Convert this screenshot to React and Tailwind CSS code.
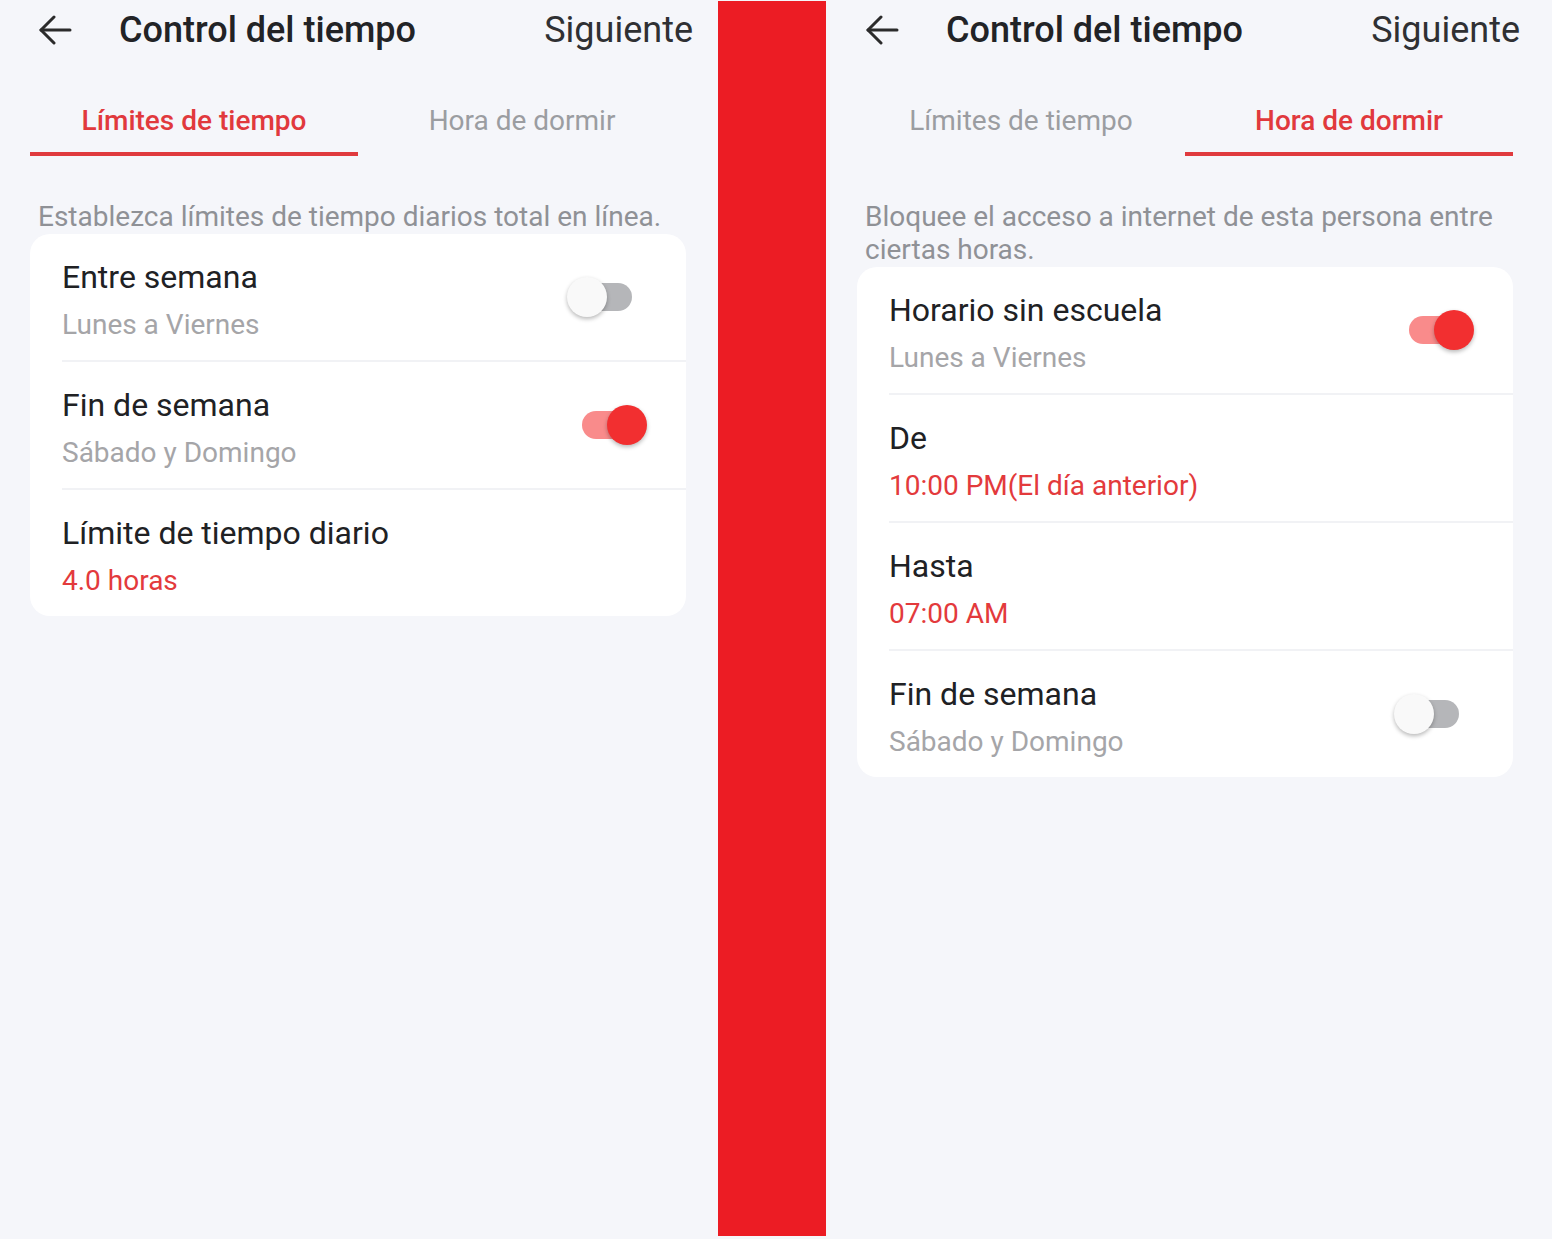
import React from "react";

const font = { fontFamily: "Roboto, 'Noto Sans', sans-serif" };

function BackArrow() {
  return (
    <svg width="34" height="30" viewBox="0 0 34 30" fill="none" stroke="#2b2b2b" strokeWidth="3" strokeLinecap="round" strokeLinejoin="round">
      <path d="M32 15H3" />
      <path d="M16 2L3 15L16 28" />
    </svg>
  );
}

function Toggle({ on }) {
  return (
    <div className="relative w-[80px] h-[40px] shrink-0">
      <div
        className={
          "absolute left-[15px] top-[6px] w-[50px] h-[28px] rounded-full " +
          (on ? "bg-[#f98b8b]" : "bg-[#b5b6b9]")
        }
      />
      <div
        className={
          "absolute top-0 w-[40px] h-[40px] rounded-full shadow-[0_2px_4px_rgba(0,0,0,0.28)] " +
          (on ? "left-[40px] bg-[#f22f30]" : "left-0 bg-[#f9f9f9]")
        }
      />
    </div>
  );
}

function Row({ title, sub, red, toggle, last }) {
  return (
    <div>
      <div className="flex justify-between h-[126px] pl-[32px] pr-[39px]">
        <div className="flex flex-col pt-[24px]">
          <div className="text-[32px] leading-[38px] text-[#202124]">{title}</div>
          <div className={"mt-[12px] text-[28px] leading-[34px] " + (red ? "text-[#e33a3c]" : "text-[#a5a5a8]")}>
            {sub}
          </div>
        </div>
        {toggle !== undefined && (
          <div className="self-center">
            <Toggle on={toggle} />
          </div>
        )}
      </div>
      {!last && <div className="ml-[32px] h-[2px] bg-[#f1f2f5]" />}
    </div>
  );
}

function Panel({ active, desc, rows }) {
  return (
    <div className="w-[718px] shrink-0">
      <div className="flex items-center h-[60px] pl-[38px] pr-[25px]">
        <BackArrow />
        <div className="ml-[47px] text-[36px] font-medium text-[#222326]">Control del tiempo</div>
        <div className="ml-auto text-[36px] text-[#2f3033]">Siguiente</div>
      </div>
      <div className="flex ml-[30px] mr-[32px]">
        {["Límites de tiempo", "Hora de dormir"].map((t, i) => (
          <div key={t} className="flex-1 flex flex-col items-center pt-[45px]">
            <div
              className={
                "text-[28px] leading-[32px] " +
                (i === active ? "text-[#e1393d] font-medium" : "text-[#9b9da1]")
              }
            >
              {t}
            </div>
            <div className={"mt-[15px] h-[4px] w-full " + (i === active ? "bg-[#e03a3e]" : "")} />
          </div>
        ))}
      </div>
      <div className="mt-[44px] pl-[38px] pr-[10px] text-[28px] leading-[33px] text-[#8f9196]">{desc}</div>
      <div className="mt-[1px] ml-[30px] mr-[32px] bg-white rounded-[20px] overflow-hidden">
        {rows.map((r, i) => (
          <Row key={i} {...r} last={i === rows.length - 1} />
        ))}
      </div>
    </div>
  );
}

export default function App() {
  return (
    <div className="flex w-[1552px] h-[1239px] bg-[#f5f6fa] overflow-hidden" style={font}>
      <Panel
        active={0}
        desc="Establezca límites de tiempo diarios total en línea."
        rows={[
          { title: "Entre semana", sub: "Lunes a Viernes", toggle: false },
          { title: "Fin de semana", sub: "Sábado y Domingo", toggle: true },
          { title: "Límite de tiempo diario", sub: "4.0 horas", red: true },
        ]}
      />
      <div className="w-[108px] shrink-0 mt-[1px] h-[1235px] bg-[#ec1c24]" />
      <div className="pl-[1px]">
        <Panel
          active={1}
          desc="Bloquee el acceso a internet de esta persona entre ciertas horas."
          rows={[
            { title: "Horario sin escuela", sub: "Lunes a Viernes", toggle: true },
            { title: "De", sub: "10:00 PM(El día anterior)", red: true },
            { title: "Hasta", sub: "07:00 AM", red: true },
            { title: "Fin de semana", sub: "Sábado y Domingo", toggle: false },
          ]}
        />
      </div>
    </div>
  );
}
